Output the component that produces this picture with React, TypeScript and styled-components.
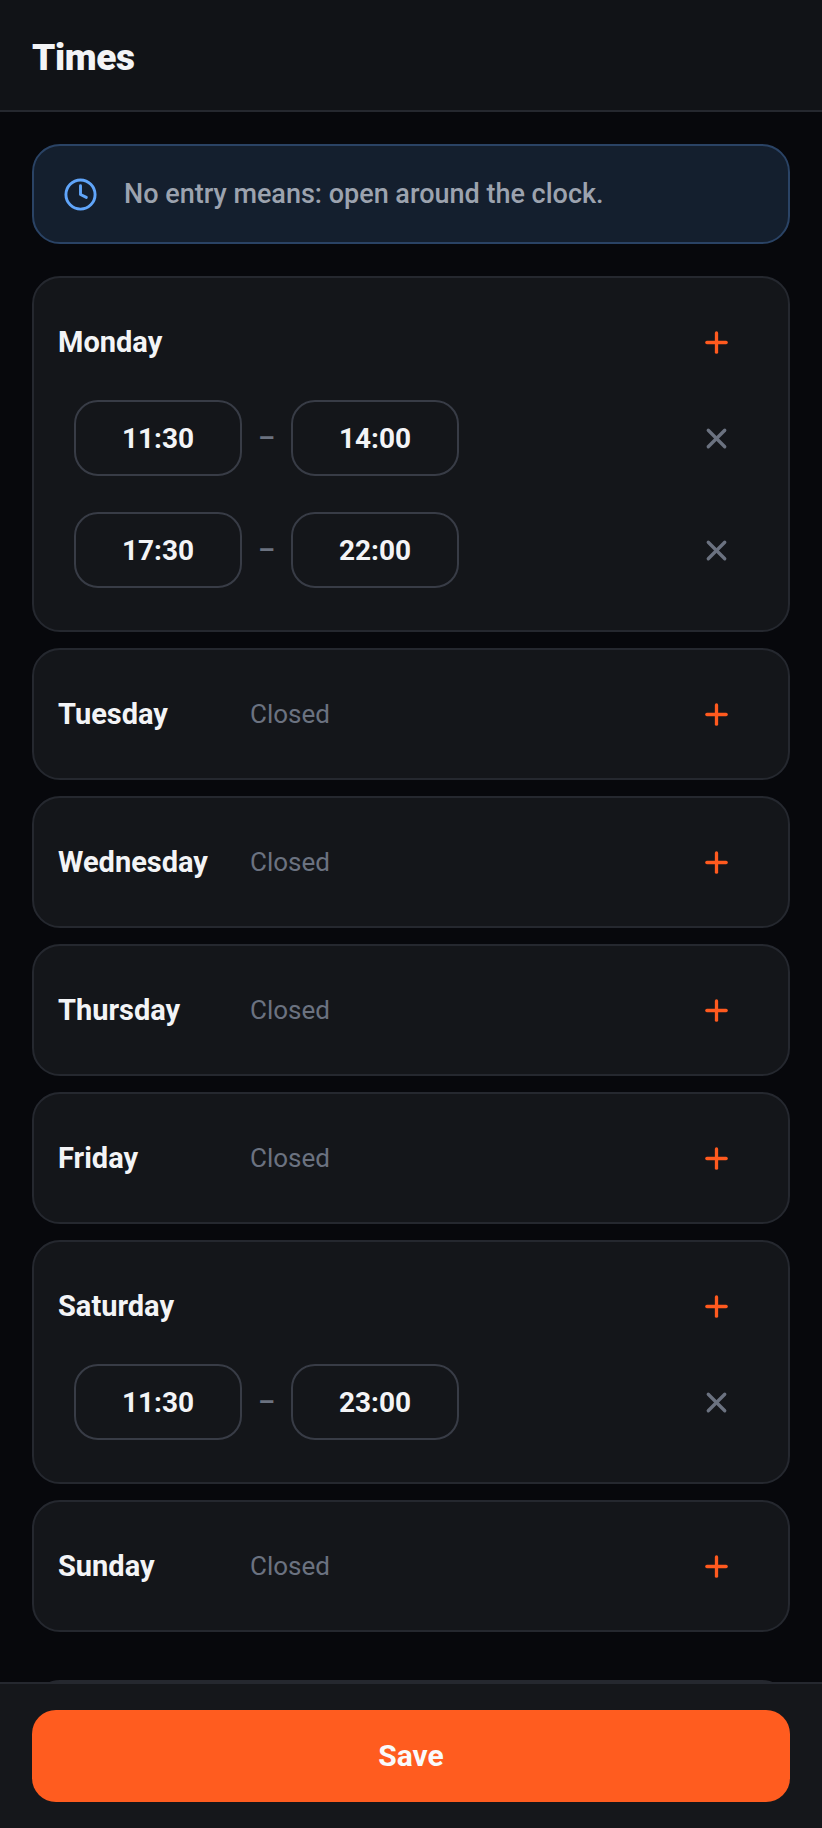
import { Clock, Plus, X } from 'lucide-react'
import styled, { createGlobalStyle } from 'styled-components'

const GlobalStyle = createGlobalStyle`
    * {
        box-sizing: border-box;
    }
    html, body {
        margin: 0;
        height: 100%;
        background-color: #07080c;
        font-family: Roboto, "Liberation Sans", sans-serif;
    }
`
const PageStyled = styled.div`
    display: flex;
    flex-direction: column;
    height: 1828px;
    overflow: hidden;
`
const HeaderStyled = styled.header`
    flex: none;
    display: flex;
    align-items: center;
    height: 112px;
    padding: 4px 32px 0;
    background-color: #111317;
    border-bottom: 2px solid #25282f;
`
const TitleStyled = styled.h1`
    margin: 0;
    font-size: 37px;
    font-weight: 900;
    letter-spacing: -0.4px;
    color: #f3f4f6;
`
const MainStyled = styled.main`
    flex: 1;
    min-height: 0;
    overflow: hidden;
    padding: 32px 32px 0;
`
const BannerStyled = styled.div`
    display: flex;
    align-items: center;
    gap: 26px;
    height: 100px;
    padding: 0 29px;
    margin-bottom: 32px;
    background-color: #141f2e;
    border: 2px solid #2a4365;
    border-radius: 28px;
`
const BannerTextStyled = styled.span`
    font-size: 27px;
    font-weight: 500;
    color: #9ca3af;
`
const ListStyled = styled.div`
    display: flex;
    flex-direction: column;
    gap: 16px;
`
const CardStyled = styled.section`
    padding: 0 24px;
    background-color: #14161a;
    border: 2px solid #25282f;
    border-radius: 28px;
`
const ExtraCardStyled = styled(CardStyled)`
    margin-top: 48px;
    height: 132px;
`
const DayRowStyled = styled.div`
    display: flex;
    align-items: center;
    height: 128px;
`
const DayNameStyled = styled.span`
    width: 192px;
    font-size: 29px;
    font-weight: 700;
    color: #f3f4f6;
`
const ClosedStyled = styled.span`
    font-size: 26px;
    color: #6b7280;
`
const IconButtonStyled = styled.button<{ $muted?: boolean }>`
    display: flex;
    align-items: center;
    justify-content: center;
    width: 40px;
    height: 40px;
    margin-left: auto;
    margin-right: 28px;
    padding: 0;
    background: none;
    border: none;
    color: ${(props) => (props.$muted ? '#6b7280' : '#ff5a1f')};
`
const SlotsStyled = styled.div`
    display: flex;
    flex-direction: column;
    gap: 36px;
    margin-top: -6px;
    padding-bottom: 42px;
`
const SlotRowStyled = styled.div`
    display: flex;
    align-items: center;
    padding-left: 16px;
`
const TimeBoxStyled = styled.div`
    display: flex;
    align-items: center;
    justify-content: center;
    width: 168px;
    height: 76px;
    font-size: 28px;
    font-weight: 700;
    color: #f3f4f6;
    border: 2px solid #383c46;
    border-radius: 24px;
`
const DashStyled = styled.span`
    width: 49px;
    text-align: center;
    font-size: 26px;
    font-weight: 700;
    color: #6b7280;
`
const FooterStyled = styled.footer`
    flex: none;
    height: 146px;
    padding: 26px 32px 0;
    margin-top: -2px;
    position: relative;
    background-color: #15171b;
    border-top: 2px solid #25282f;
`
const SaveButtonStyled = styled.button`
    display: block;
    width: 100%;
    height: 92px;
    padding: 0 0 2px;
    font-family: inherit;
    font-size: 30px;
    font-weight: 700;
    color: #f9fafb;
    background-color: #ff5c1f;
    border: none;
    border-radius: 24px;
`

type Slot = { from: string; to: string }
type Day = { name: string; slots: Slot[] }

const days: Day[] = [
    { name: 'Monday', slots: [{ from: '11:30', to: '14:00' }, { from: '17:30', to: '22:00' }] },
    { name: 'Tuesday', slots: [] },
    { name: 'Wednesday', slots: [] },
    { name: 'Thursday', slots: [] },
    { name: 'Friday', slots: [] },
    { name: 'Saturday', slots: [{ from: '11:30', to: '23:00' }] },
    { name: 'Sunday', slots: [] },
]

function DayCard({ day }: { day: Day }) {
    return (
        <CardStyled>
            <DayRowStyled>
                <DayNameStyled>{day.name}</DayNameStyled>
                {day.slots.length === 0 && <ClosedStyled>Closed</ClosedStyled>}
                <IconButtonStyled><Plus size={33} strokeWidth={2.4} /></IconButtonStyled>
            </DayRowStyled>
            {day.slots.length > 0 && (
                <SlotsStyled>
                    {day.slots.map((slot) => (
                        <SlotRowStyled key={slot.from}>
                            <TimeBoxStyled>{slot.from}</TimeBoxStyled>
                            <DashStyled>–</DashStyled>
                            <TimeBoxStyled>{slot.to}</TimeBoxStyled>
                            <IconButtonStyled $muted><X size={33} strokeWidth={2.4} /></IconButtonStyled>
                        </SlotRowStyled>
                    ))}
                </SlotsStyled>
            )}
        </CardStyled>
    )
}

function App() {
    return (
        <PageStyled>
            <GlobalStyle />
            <HeaderStyled>
                <TitleStyled>Times</TitleStyled>
            </HeaderStyled>
            <MainStyled>
                <BannerStyled>
                    <Clock size={35} color="#60a5fa" />
                    <BannerTextStyled>No entry means: open around the clock.</BannerTextStyled>
                </BannerStyled>
                <ListStyled>
                    {days.map((day) => (
                        <DayCard key={day.name} day={day} />
                    ))}
                </ListStyled>
                <ExtraCardStyled />
            </MainStyled>
            <FooterStyled>
                <SaveButtonStyled>Save</SaveButtonStyled>
            </FooterStyled>
        </PageStyled>
    )
}

export default App
